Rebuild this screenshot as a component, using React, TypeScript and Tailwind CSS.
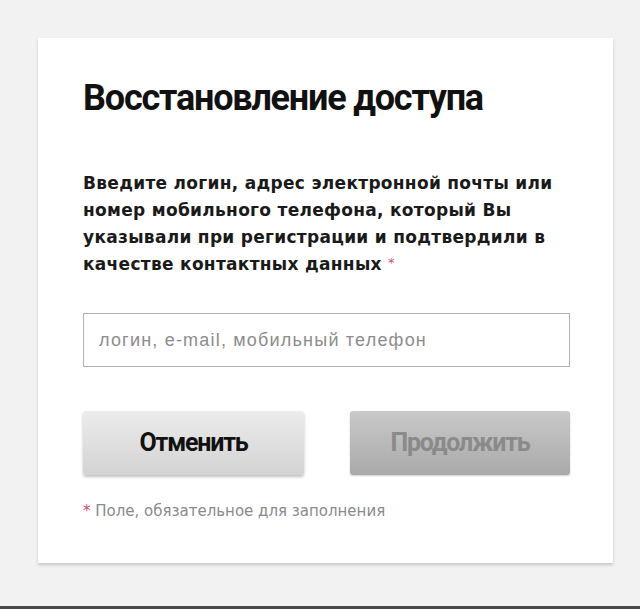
import React from "react";

export default function App() {
  return (
    <div className="flex h-[609px] w-[640px] flex-col bg-[#f2f2f2]" style={{ fontFamily: '"DejaVu Sans", "Liberation Sans", sans-serif' }}>
      <div className="h-[606px] pl-[38px] pt-[38px]">
        <div className="flex h-[525px] w-[575px] flex-col bg-white pl-[45px] pr-[40px] pt-[38px] shadow-[0_2px_3px_rgba(0,0,0,0.18)]">
          <h1 className="text-[36px] font-bold leading-[44px] tracking-[-1.2px] text-[#111]" style={{ fontFamily: 'Roboto, "Liberation Sans", sans-serif' }}>
            Восстановление доступа
          </h1>
          <p className="mt-[50px] text-[17px] font-bold leading-[27px] tracking-[0.3px] text-[#1a1a1a]">
            Введите логин, адрес электронной почты или номер мобильного телефона, который Вы указывали при регистрации и подтвердили в качестве контактных данных{" "}
            <span className="align-[3px] text-[13px] leading-none font-normal text-[#d0506a]">*</span>
          </p>
          <input
            className="mt-[35px] h-[54px] w-[487px] border border-[#b3b3b3] bg-white px-[15px] text-[18px] text-[#333] outline-none placeholder:text-[#8c8c8c]"
            style={{ fontFamily: '"Liberation Sans", Arial, sans-serif', letterSpacing: '1.2px' }}
            placeholder="логин, e-mail, мобильный телефон"
          />
          <div className="mt-[44px] flex w-[487px] justify-between">
            <button
              className="h-[64px] w-[221px] rounded-[3px] bg-gradient-to-b from-[#ececec] to-[#d3d3d3] text-[25px] font-bold tracking-[-1.2px] text-[#111] shadow-[0_2px_3px_rgba(0,0,0,0.25)]"
              style={{ fontFamily: 'Roboto, "Liberation Sans", sans-serif' }}
            >
              Отменить
            </button>
            <button
              className="h-[64px] w-[220px] rounded-[3px] bg-gradient-to-b from-[#c9c9c9] to-[#a9a9a9] text-[25px] font-bold tracking-[-1.2px] text-[#8a8a8a] shadow-[0_1px_2px_rgba(0,0,0,0.2)]"
              style={{ fontFamily: 'Roboto, "Liberation Sans", sans-serif' }}
            >
              Продолжить
            </button>
          </div>
          <p className="mt-[26px] text-[15px] leading-[20px] text-[#8a8a8a]">
            <span className="text-[#d0506a]">*</span> Поле, обязательное для заполнения
          </p>
        </div>
      </div>
      <div className="h-[3px] bg-[#4a4a4a]" />
    </div>
  );
}
